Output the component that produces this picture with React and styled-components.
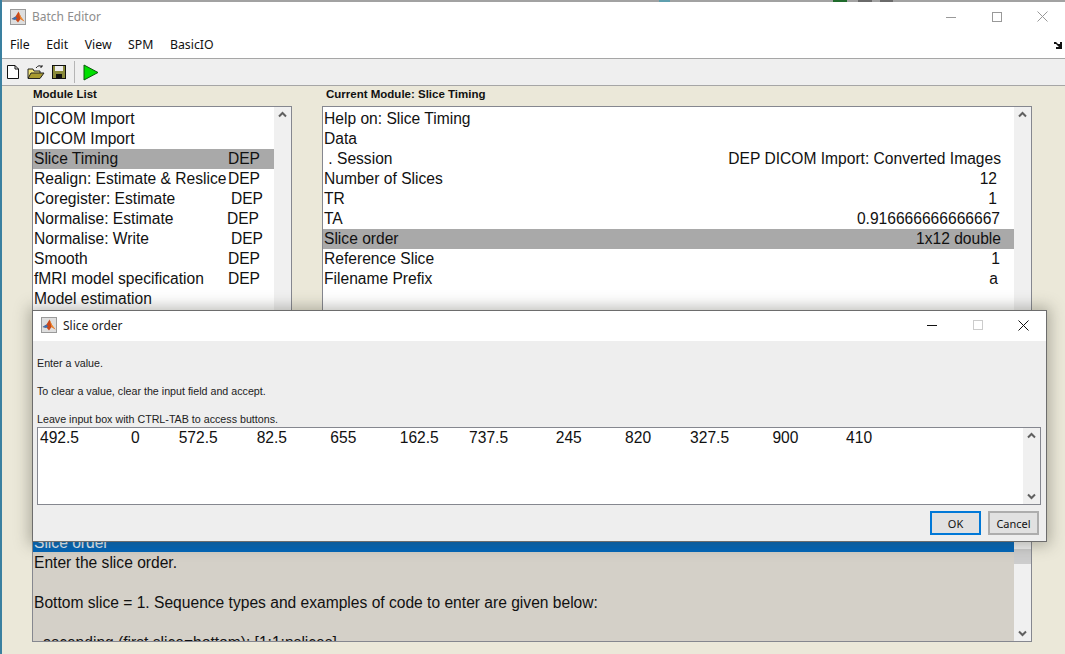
import styled, { createGlobalStyle } from "styled-components";

const GlobalStyle = createGlobalStyle`
    html, body {
        margin: 0;
        padding: 0;
        height: 100%;
        overflow: hidden;
        background: #ebe8d9;
    }
`

const Page = styled.div`
    position: relative;
    width: 1065px;
    height: 654px;
    overflow: hidden;
    display: flex;
    flex-direction: column;
    border-left: 2px solid #3a80a0;
    box-sizing: border-box;
    background: #ebe8d9;
`

const TopEdge = styled.div`
    height: 2px;
    flex-shrink: 0;
    background: linear-gradient(90deg,
        #a2a2a2 657px, #5f9fae 657px, #5f9fae 668px, #a2a2a2 668px,
        #a2a2a2 831px, #1f6b2c 831px, #1f6b2c 845px, #a2a2a2 845px,
        #a2a2a2 856px, #6a6a6a 856px, #6a6a6a 870px, #a2a2a2 870px,
        #a2a2a2 878px, #6a6a6a 878px, #6a6a6a 891px, #a2a2a2 891px);
`

const TitleBar = styled.div`
    height: ${(p) => p.$height}px;
    flex-shrink: 0;
    box-sizing: border-box;
    display: flex;
    align-items: center;
    background: #fff;
    padding: 0 0 2px ${(p) => p.$left}px;
    font-family: "Noto Sans", sans-serif;
    font-size: 12px;
    color: ${(p) => (p.$active ? "#222" : "#8d8d8d")};
`

const TitleText = styled.span`
    margin-left: 6px;
    flex: 1;
`

const WinButton = styled.div`
    width: 45.5px;
    height: 100%;
    display: flex;
    align-items: center;
    justify-content: center;
`

const MenuBar = styled.div`
    height: 26px;
    flex-shrink: 0;
    box-sizing: border-box;
    display: flex;
    align-items: center;
    background: #fff;
    padding: 0 3px 3px 8px;
    gap: 16.5px;
    font-family: "Noto Sans", sans-serif;
    font-size: 12.3px;
    color: #111;
    border-bottom: 1px solid #a6a6a6;
`

const MenuItem = styled.span``

const MenuCorner = styled.svg`
    margin-left: auto;
    margin-top: 2px;
`

const ToolBar = styled.div`
    height: 27px;
    flex-shrink: 0;
    box-sizing: border-box;
    display: flex;
    align-items: center;
    background: #efefef;
    padding-left: 4px;
    border-bottom: 1px solid #a6a6a6;
`

const ToolIcon = styled.svg`
    margin-right: ${(p) => p.$gap || 0}px;
`

const ToolSep = styled.div`
    width: 1px;
    height: 22px;
    background: #b5b5b5;
    margin: 0 8px 0 7px;
`

const Workspace = styled.div`
    flex: 1;
    min-height: 0;
    display: grid;
    grid-template-columns: 260px 710px;
    grid-template-rows: 20px 424px 112px;
    column-gap: 30px;
    padding: 0 0 0 30px;
`

const PanelLabel = styled.div`
    font-family: "Liberation Sans", Arial, sans-serif;
    font-size: 11.5px;
    font-weight: bold;
    color: #111;
    line-height: 16px;
    padding-left: ${(p) => p.$left}px;
`

const ListBox = styled.div`
    position: relative;
    display: flex;
    box-sizing: border-box;
    min-height: 0;
    overflow: hidden;
    border: 1px solid #85878f;
    background: ${(p) => p.$bg || "#fff"};
    grid-column: ${(p) => (p.$wide ? "1 / span 2" : "auto")};
`

const ListRows = styled.div`
    flex: 1;
    min-width: 0;
    padding-top: 2px;
`

const Row = styled.div`
    height: ${(p) => (p.$blue ? 19 : 20)}px;
    margin-bottom: ${(p) => (p.$blue ? 1 : 0)}px;
    display: flex;
    justify-content: space-between;
    padding: 0 ${(p) => p.$right || 0}px 0 1px;
    white-space: pre;
    font-family: "Liberation Sans", Arial, sans-serif;
    font-size: 15.6px;
    line-height: 20px;
    color: ${(p) => (p.$blue ? "#e8f0f8" : "#111")};
    background: ${(p) => (p.$blue ? "#0066bb" : p.$selected ? "#a9a9a9" : "transparent")};
`

const ScrollBar = styled.div`
    width: 17px;
    flex-shrink: 0;
    position: relative;
    display: flex;
    flex-direction: column;
    align-items: center;
    justify-content: space-between;
    padding: 4px 0;
    box-sizing: border-box;
    background: #f0f0f0;
`

const Thumb = styled.div`
    position: absolute;
    left: 0;
    right: 0;
    top: 18px;
    height: 15px;
    background: #cdcdcd;
`

const Dialog = styled.div`
    position: absolute;
    left: 30px;
    top: 310px;
    width: 1015px;
    height: 232px;
    box-sizing: border-box;
    border: 1px solid #6d6d6d;
    background: #eeeeee;
    box-shadow: 0 0 14px 3px rgba(60, 60, 50, 0.35);
    display: flex;
    flex-direction: column;
`

const DialogBody = styled.div`
    flex: 1;
    display: flex;
    flex-direction: column;
    padding: 15px 5px 6px 4px;
`

const HelpText = styled.div`
    font-family: "Liberation Sans", Arial, sans-serif;
    font-size: 10.7px;
    line-height: 14px;
    color: #222;
    white-space: pre;
`

const ValueBox = styled.div`
    height: 78px;
    flex-shrink: 0;
    margin-top: 1px;
    display: flex;
    box-sizing: border-box;
    border: 1px solid #85878f;
    background: #fff;
`

const ValueText = styled.div`
    flex: 1;
    padding-left: 2px;
    white-space: pre;
    font-family: "Liberation Sans", Arial, sans-serif;
    font-size: 15.6px;
    line-height: 19px;
    color: #111;
`

const ButtonRow = styled.div`
    display: flex;
    justify-content: flex-end;
    gap: 7px;
    margin-top: 6px;
    padding-right: 2px;
`

const Button = styled.button`
    width: 51px;
    height: 24px;
    padding: 0;
    box-sizing: border-box;
    border: 2px solid ${(p) => (p.$primary ? "#0078d7" : "#adadad")};
    background: #e1e1e1;
    font-family: "Noto Sans", sans-serif;
    font-size: 11px;
    color: #111;
`

function MatlabIcon() {
    return (
        <svg width="16" height="16" viewBox="0 0 16 16">
            <rect x="0.5" y="0.5" width="15" height="15" fill="#dedede" stroke="#9a9a9a" />
            <path d="M1.5 10 L5.5 7.5 L8.5 2.5 L11 8 L14.5 12.5 L10.5 10 L8 13.5 L5.5 10.5 Z" fill="#c9481a" />
            <path d="M1.5 10 L5.5 7.5 L7 9.5 L5 11 Z" fill="#3a6fb0" />
            <path d="M8.5 2.5 L11 8 L14.5 12.5 L10.5 10 Z" fill="#f09030" />
        </svg>
    )
}

function MinIcon({ color }) {
    return (
        <svg width="10" height="10" viewBox="0 0 10 10">
            <path d="M0 5.5 H10" stroke={color} strokeWidth="1" />
        </svg>
    )
}

function MaxIcon({ color }) {
    return (
        <svg width="10" height="10" viewBox="0 0 10 10">
            <rect x="0.5" y="0.5" width="9" height="9" fill="none" stroke={color} />
        </svg>
    )
}

function CloseIcon({ color }) {
    return (
        <svg width="11" height="11" viewBox="0 0 11 11">
            <path d="M0.5 0.5 L10.5 10.5 M10.5 0.5 L0.5 10.5" stroke={color} strokeWidth="1" />
        </svg>
    )
}

function Chevron({ down }) {
    return (
        <svg width="9" height="7" viewBox="0 0 9 7">
            <path d={down ? "M1 1.5 L4.5 5 L8 1.5" : "M1 5.5 L4.5 2 L8 5.5"} fill="none" stroke="#606060" strokeWidth="2" />
        </svg>
    )
}

const modules = [
    ["DICOM Import", ""],
    ["DICOM Import", ""],
    ["Slice Timing", "DEP", 14],
    ["Realign: Estimate & Reslice", "DEP", 14],
    ["Coregister: Estimate", "DEP", 11],
    ["Normalise: Estimate", "DEP", 15],
    ["Normalise: Write", "DEP", 11],
    ["Smooth", "DEP", 14],
    ["fMRI model specification", "DEP", 14],
    ["Model estimation", ""],
];

const fields = [
    ["Help on: Slice Timing", ""],
    ["Data", ""],
    [" . Session", "DEP DICOM Import: Converted Images", 13],
    ["Number of Slices", "12", 17],
    ["TR", "1", 17],
    ["TA", "0.916666666666667", 14],
    ["Slice order", "1x12 double", 13],
    ["Reference Slice", "1", 14],
    ["Filename Prefix", "a", 16],
];

const helpLines = [
    "Slice order",
    "Enter the slice order.",
    "",
    "Bottom slice = 1. Sequence types and examples of code to enter are given below:",
    "",
    "  ascending (first slice=bottom): [1:1:nslices]",
];

const sliceValues = "492.5            0         572.5         82.5          655          162.5       737.5           245          820         327.5          900           410";

export default function App() {
    return (
        <>
            <GlobalStyle />
            <Page>
                <TopEdge />
                <TitleBar $height={31} $left={8}>
                    <MatlabIcon />
                    <TitleText>Batch Editor</TitleText>
                    <WinButton><MinIcon color="#999" /></WinButton>
                    <WinButton><MaxIcon color="#999" /></WinButton>
                    <WinButton><CloseIcon color="#999" /></WinButton>
                </TitleBar>
                <MenuBar>
                    <MenuItem>File</MenuItem>
                    <MenuItem>Edit</MenuItem>
                    <MenuItem>View</MenuItem>
                    <MenuItem>SPM</MenuItem>
                    <MenuItem>BasicIO</MenuItem>
                    <MenuCorner width="8" height="7" viewBox="0 0 8 7">
                        <path d="M0 0 H2 L4 2 L6 2 V0 L8 0 V7 H2 V5 H5 L2 2 H0 Z" fill="#111" />
                    </MenuCorner>
                </MenuBar>
                <ToolBar>
                    <ToolIcon $gap={7} width="14" height="16" viewBox="0 0 14 16">
                        <path d="M1.5 1.5 H9 L12.5 5 V14.5 H1.5 Z" fill="#fff" stroke="#111" />
                        <path d="M9 1.5 V5 H12.5" fill="none" stroke="#111" />
                    </ToolIcon>
                    <ToolIcon $gap={6} width="18" height="16" viewBox="0 0 18 16">
                        <path d="M1 5 H6 L7 7 H13 V14 H1 Z" fill="#efe27a" stroke="#222" />
                        <path d="M1 14.5 L4 9 H17 L13 14.5 Z" fill="#a89a30" stroke="#222" />
                        <path d="M9 4 Q12 0 15 3 M15 3 V1 M15 3 H13" fill="none" stroke="#222" />
                    </ToolIcon>
                    <ToolIcon width="16" height="16" viewBox="0 0 16 16">
                        <rect x="1.5" y="1.5" width="13" height="13" fill="#8a8a3a" stroke="#111" />
                        <rect x="4" y="2" width="8" height="5" fill="#eee" />
                        <rect x="5" y="10" width="6" height="4" fill="#111" />
                    </ToolIcon>
                    <ToolSep />
                    <ToolIcon width="16" height="17" viewBox="0 0 16 17">
                        <path d="M1 1 L15 8.5 L1 16 Z" fill="#00e000" stroke="#0a5a0a" />
                    </ToolIcon>
                </ToolBar>
                <Workspace>
                    <PanelLabel $left={1}>Module List</PanelLabel>
                    <PanelLabel $left={4}>Current Module: Slice Timing</PanelLabel>
                    <ListBox>
                        <ListRows>
                            {modules.map(([name, dep, right], i) => (
                                <Row key={i} $right={right} $selected={i === 2}>
                                    <span>{name}</span>
                                    <span>{dep}</span>
                                </Row>
                            ))}
                        </ListRows>
                        <ScrollBar><Chevron /><Chevron down /></ScrollBar>
                    </ListBox>
                    <ListBox>
                        <ListRows>
                            {fields.map(([name, value, right], i) => (
                                <Row key={i} $right={right} $selected={i === 6}>
                                    <span>{name}</span>
                                    <span>{value}</span>
                                </Row>
                            ))}
                        </ListRows>
                        <ScrollBar><Chevron /><Chevron down /></ScrollBar>
                    </ListBox>
                    <ListBox $wide $bg="#d4d0c8">
                        <ListRows>
                            {helpLines.map((line, i) => (
                                <Row key={i} $blue={i === 0}>{line}</Row>
                            ))}
                        </ListRows>
                        <ScrollBar><Thumb /><Chevron /><Chevron down /></ScrollBar>
                    </ListBox>
                </Workspace>
                <Dialog>
                    <TitleBar $height={30} $left={8} $active>
                        <MatlabIcon />
                        <TitleText>Slice order</TitleText>
                        <WinButton><MinIcon color="#111" /></WinButton>
                        <WinButton><MaxIcon color="#ccc" /></WinButton>
                        <WinButton><CloseIcon color="#111" /></WinButton>
                    </TitleBar>
                    <DialogBody>
                        <HelpText>{"Enter a value.\n\nTo clear a value, clear the input field and accept.\n\nLeave input box with CTRL-TAB to access buttons."}</HelpText>
                        <ValueBox>
                            <ValueText>{sliceValues}</ValueText>
                            <ScrollBar><Chevron /><Chevron down /></ScrollBar>
                        </ValueBox>
                        <ButtonRow>
                            <Button $primary>OK</Button>
                            <Button>Cancel</Button>
                        </ButtonRow>
                    </DialogBody>
                </Dialog>
            </Page>
        </>
    )
}
